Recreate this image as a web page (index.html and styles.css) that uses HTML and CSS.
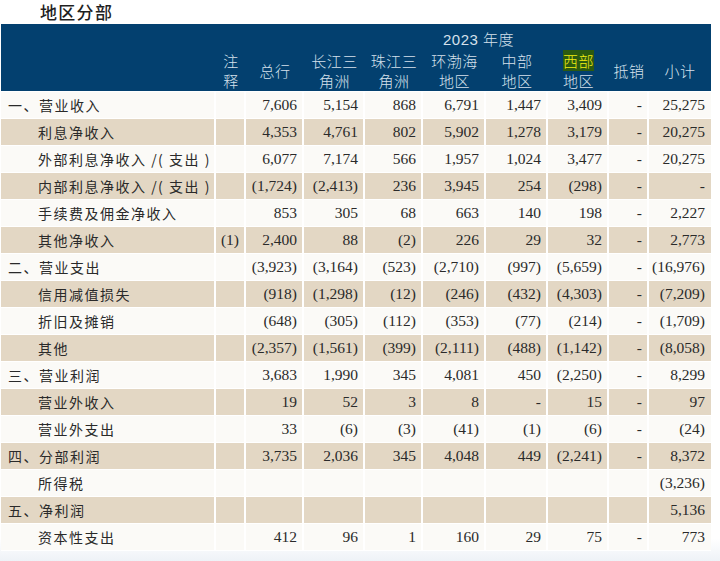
FILE: index.html
```html
<!DOCTYPE html>
<html lang="zh-CN">
<head>
<meta charset="utf-8">
<title>地区分部</title>
<link rel="stylesheet" href="styles.css">
</head>
<body>
<div class="page">
  <h1 class="title">地区分部</h1>
  <div class="sheet">
    <div class="head">
      <div class="year">2023 年度</div>
      <div class="hc hc-lbl"></div>
      <div class="hc"><span class="ht">注<br>释</span></div>
      <div class="hc"><span class="ht">总行</span></div>
      <div class="hc"><span class="ht">长江三<br>角洲</span></div>
      <div class="hc"><span class="ht">珠江三<br>角洲</span></div>
      <div class="hc"><span class="ht">环渤海<br>地区</span></div>
      <div class="hc"><span class="ht">中部<br>地区</span></div>
      <div class="hc"><span class="ht"><span class="mark">西部</span><br>地区</span></div>
      <div class="hc"><span class="ht">抵销</span></div>
      <div class="hc"><span class="ht">小计</span></div>
    </div>
    <div class="body">
      <div class="row sec"><div class="lbl">一、营业收入</div><div class="note"></div><div class="n">7,606</div><div class="n">5,154</div><div class="n">868</div><div class="n">6,791</div><div class="n">1,447</div><div class="n">3,409</div><div class="n">-</div><div class="n">25,275</div></div>
      <div class="row"><div class="lbl">利息净收入</div><div class="note"></div><div class="n">4,353</div><div class="n">4,761</div><div class="n">802</div><div class="n">5,902</div><div class="n">1,278</div><div class="n">3,179</div><div class="n">-</div><div class="n">20,275</div></div>
      <div class="row"><div class="lbl">外部利息净收入 /( 支出 )</div><div class="note"></div><div class="n">6,077</div><div class="n">7,174</div><div class="n">566</div><div class="n">1,957</div><div class="n">1,024</div><div class="n">3,477</div><div class="n">-</div><div class="n">20,275</div></div>
      <div class="row"><div class="lbl">内部利息净收入 /( 支出 )</div><div class="note"></div><div class="n">(1,724)</div><div class="n">(2,413)</div><div class="n">236</div><div class="n">3,945</div><div class="n">254</div><div class="n">(298)</div><div class="n">-</div><div class="n">-</div></div>
      <div class="row"><div class="lbl">手续费及佣金净收入</div><div class="note"></div><div class="n">853</div><div class="n">305</div><div class="n">68</div><div class="n">663</div><div class="n">140</div><div class="n">198</div><div class="n">-</div><div class="n">2,227</div></div>
      <div class="row"><div class="lbl">其他净收入</div><div class="note">(1)</div><div class="n">2,400</div><div class="n">88</div><div class="n">(2)</div><div class="n">226</div><div class="n">29</div><div class="n">32</div><div class="n">-</div><div class="n">2,773</div></div>
      <div class="row sec"><div class="lbl">二、营业支出</div><div class="note"></div><div class="n">(3,923)</div><div class="n">(3,164)</div><div class="n">(523)</div><div class="n">(2,710)</div><div class="n">(997)</div><div class="n">(5,659)</div><div class="n">-</div><div class="n">(16,976)</div></div>
      <div class="row"><div class="lbl">信用减值损失</div><div class="note"></div><div class="n">(918)</div><div class="n">(1,298)</div><div class="n">(12)</div><div class="n">(246)</div><div class="n">(432)</div><div class="n">(4,303)</div><div class="n">-</div><div class="n">(7,209)</div></div>
      <div class="row"><div class="lbl">折旧及摊销</div><div class="note"></div><div class="n">(648)</div><div class="n">(305)</div><div class="n">(112)</div><div class="n">(353)</div><div class="n">(77)</div><div class="n">(214)</div><div class="n">-</div><div class="n">(1,709)</div></div>
      <div class="row"><div class="lbl">其他</div><div class="note"></div><div class="n">(2,357)</div><div class="n">(1,561)</div><div class="n">(399)</div><div class="n">(2,111)</div><div class="n">(488)</div><div class="n">(1,142)</div><div class="n">-</div><div class="n">(8,058)</div></div>
      <div class="row sec"><div class="lbl">三、营业利润</div><div class="note"></div><div class="n">3,683</div><div class="n">1,990</div><div class="n">345</div><div class="n">4,081</div><div class="n">450</div><div class="n">(2,250)</div><div class="n">-</div><div class="n">8,299</div></div>
      <div class="row"><div class="lbl">营业外收入</div><div class="note"></div><div class="n">19</div><div class="n">52</div><div class="n">3</div><div class="n">8</div><div class="n">-</div><div class="n">15</div><div class="n">-</div><div class="n">97</div></div>
      <div class="row"><div class="lbl">营业外支出</div><div class="note"></div><div class="n">33</div><div class="n">(6)</div><div class="n">(3)</div><div class="n">(41)</div><div class="n">(1)</div><div class="n">(6)</div><div class="n">-</div><div class="n">(24)</div></div>
      <div class="row sec"><div class="lbl">四、分部利润</div><div class="note"></div><div class="n">3,735</div><div class="n">2,036</div><div class="n">345</div><div class="n">4,048</div><div class="n">449</div><div class="n">(2,241)</div><div class="n">-</div><div class="n">8,372</div></div>
      <div class="row"><div class="lbl">所得税</div><div class="note"></div><div class="n"></div><div class="n"></div><div class="n"></div><div class="n"></div><div class="n"></div><div class="n"></div><div class="n"></div><div class="n">(3,236)</div></div>
      <div class="row sec"><div class="lbl">五、净利润</div><div class="note"></div><div class="n"></div><div class="n"></div><div class="n"></div><div class="n"></div><div class="n"></div><div class="n"></div><div class="n"></div><div class="n">5,136</div></div>
      <div class="row"><div class="lbl">资本性支出</div><div class="note"></div><div class="n">412</div><div class="n">96</div><div class="n">1</div><div class="n">160</div><div class="n">29</div><div class="n">75</div><div class="n">-</div><div class="n">773</div></div>
    </div>
  </div>
</div>
</body>
</html>
```

FILE: styles.css
```css
html, body {
  margin: 0;
  padding: 0;
}
body {
  width: 720px;
  height: 561px;
  overflow: hidden;
  background: linear-gradient(180deg, #ffffff 0%, #ffffff 96%, #eef2f7 100%);
  font-family: "Noto Sans CJK SC", "Noto Sans", sans-serif;
}
.page {
  padding: 0 0 0 1px;
}
.title {
  margin: 0;
  padding-left: 39px;
  height: 24px;
  line-height: 24px;
  font-size: 17px;
  font-weight: 500;
  letter-spacing: 1.3px;
  color: #1f1f1f;
}
.sheet {
  width: 710px;
}
.head,
.row {
  display: grid;
  grid-template-columns: 215px 30px 58px 61px 58px 63px 62px 61px 40px 62px;
}
.head {
  background: #03406f;
  color: #d6e1ec;
  grid-template-rows: 27px 40px;
  font-size: 15px;
  font-weight: 300;
  border-bottom: 1px solid #ffffff;
}
.year {
  grid-column: 3 / 11;
  grid-row: 1;
  text-align: center;
  align-self: end;
  line-height: 20px;
  padding-bottom: 1px;
  font-family: "Liberation Sans", "Noto Sans CJK SC", sans-serif;
  letter-spacing: 0.5px;
}
.hc {
  grid-row: 2;
  display: flex;
  align-items: center;
  justify-content: center;
  padding-bottom: 1px;
}
.ht {
  display: block;
  text-align: center;
  line-height: 20px;
  letter-spacing: 0.5px;
}
.hc-lbl {
  grid-column: 1;
}
.mark {
  background: #2c5a10;
  color: #f2ee10;
}
.row {
  height: 27px;
  box-sizing: border-box;
  border-bottom: 1px solid #ffffff;
  background: #fbfaf7;
  color: #2a2a2a;
}
.row:nth-child(even) {
  background: #e3d7c4;
}
.row > div {
  box-sizing: border-box;
  border-right: 2px solid #ffffff;
  display: flex;
  align-items: center;
  height: 26px;
}
.row > div:last-child {
  border-right: none;
}
.lbl {
  padding-left: 37px;
  font-size: 14px;
  letter-spacing: 1.5px;
  white-space: nowrap;
}
.sec .lbl {
  padding-left: 7px;
}
.note,
.n {
  font-family: "Liberation Serif", serif;
  font-size: 15.5px;
}
.note {
  justify-content: center;
}
.n {
  justify-content: flex-end;
  padding-right: 5px;
}
.row > .n:last-child {
  padding-right: 6px;
}
```
